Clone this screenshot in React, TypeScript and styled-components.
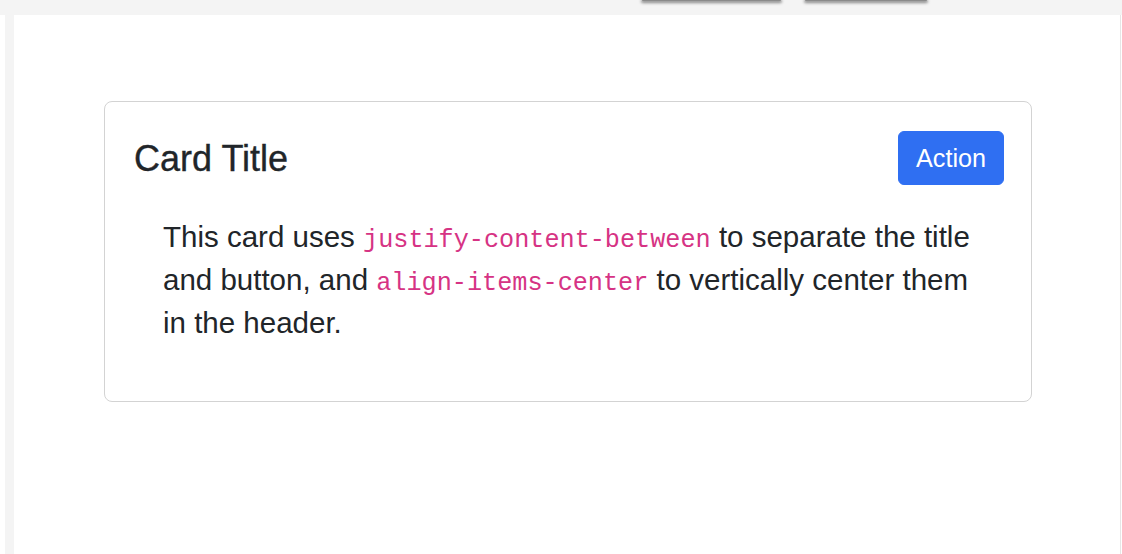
import React from "react";
import styled, { createGlobalStyle } from "styled-components";

const GlobalStyle = createGlobalStyle`
  html, body {
    margin: 0;
    padding: 0;
    background: #ffffff;
  }
  body {
    font-family: "Liberation Sans", Arial, sans-serif;
    color: #212529;
  }
`;

const Page = styled.div`
  width: 1122px;
  height: 554px;
  display: flex;
  flex-direction: column;
  overflow: hidden;
`;

const TopBar = styled.div`
  height: 15px;
  flex: none;
  background: #f4f4f4;
  display: flex;
  align-items: flex-start;
  gap: 24px;
  padding-left: 642px;
`;

const HiddenButton = styled.div<{ $w: number }>`
  width: ${(p) => p.$w}px;
  height: 1px;
  background: #8a8a8a;
  border-radius: 0 0 3px 3px;
  box-shadow: 0 1px 3px 1px rgba(0, 0, 0, 0.45);
`;

const Body = styled.div`
  flex: 1;
  display: flex;
`;

const LeftGutter = styled.div`
  width: 5px;
  flex: none;
  background: #ffffff;
`;

const LeftStrip = styled.div`
  width: 9px;
  flex: none;
  background: #f4f4f4;
`;

const Main = styled.main`
  width: 1107px;
  flex: none;
  background: #ffffff;
  border-right: 1px solid #e6e6e6;
  box-sizing: border-box;
  padding: 86px 88px 0 90px;
`;

const Card = styled.section`
  box-sizing: border-box;
  width: 928px;
  border: 1px solid #d3d3d3;
  border-radius: 8px;
  padding: 29px 27px 28px 29px;
  background: #ffffff;
`;

const Header = styled.div`
  display: flex;
  justify-content: space-between;
  align-items: center;
  height: 54px;
`;

const Title = styled.h5`
  margin: 0;
  font-family: "Liberation Sans", Arial, sans-serif;
  font-size: 36px;
  font-weight: 400;
  line-height: 43px;
  color: #212529;
  -webkit-text-stroke: 0.35px #212529;
`;

const ActionButton = styled.button`
  font-family: "Liberation Sans", Arial, sans-serif;
  font-size: 25.2px;
  line-height: 38px;
  color: #ffffff;
  background: #2f6ff2;
  border: 1px solid #2f6ff2;
  border-radius: 6px;
  padding: 7px 17px;
  cursor: pointer;
`;

const Text = styled.p`
  margin: 30px 0 29px 0;
  padding-left: 29px;
  width: 810px;
  font-size: 29.5px;
  line-height: 43px;
  color: #212529;
`;

const Code = styled.code`
  font-family: "Liberation Mono", "DejaVu Sans Mono", monospace;
  font-size: 25.2px;
  line-height: 1;
  color: #d63384;
`;

export default function App() {
  return (
    <>
      <GlobalStyle />
      <Page>
        <TopBar>
          <HiddenButton $w={139} />
          <HiddenButton $w={122} />
        </TopBar>
        <Body>
          <LeftGutter />
          <LeftStrip />
          <Main>
            <Card>
              <Header>
                <Title>Card Title</Title>
                <ActionButton>Action</ActionButton>
              </Header>
              <Text>
                This card uses <Code>justify-content-between</Code> to separate the title
                and button, and <Code>align-items-center</Code> to vertically center them
                in the header.
              </Text>
            </Card>
          </Main>
        </Body>
      </Page>
    </>
  );
}
